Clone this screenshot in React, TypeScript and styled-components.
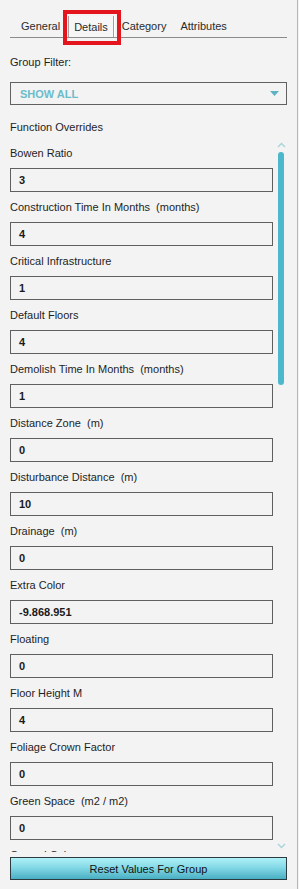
import styled, { createGlobalStyle } from 'styled-components';

const GlobalStyle = createGlobalStyle`
	html, body {
		margin: 0;
		padding: 0;
		background: #f3f3f3;
	}

	body {
		font-family: 'Liberation Sans', Arial, sans-serif;
		font-size: 11px;
		color: #1e1e1e;
	}
`;

const Panel = styled.div`
	display: flex;
	flex-direction: column;

	width: 298px;
	height: 889px;
	padding: 0 10px;
	box-sizing: border-box;
	overflow: hidden;

	background: #f3f3f3;
	border-right: 1px solid #9cc994;
`;

const TabBar = styled.div`
	display: flex;
	align-items: flex-end;
	gap: 2px;

	height: 38px;
	padding-left: 5px;
	box-sizing: border-box;
	border-bottom: 1px solid #8c8c8c;
`;

const Tab = styled.div<{ $active?: boolean }>`
	position: relative;
	padding: ${({ $active }) => ($active ? '0 5px' : '0 6px')};
	height: ${({ $active }) => ($active ? '21px' : '20px')};
	line-height: ${({ $active }) => ($active ? '23px' : '19px')};
	color: #2b2b2b;
	white-space: nowrap;
	box-sizing: border-box;

	border-left: ${({ $active }) => ($active ? '1px solid #a0a0a0' : 'none')};
	border-right: ${({ $active }) => ($active ? '1px solid #a0a0a0' : 'none')};
	box-shadow: ${({ $active }) => ($active ? '1px 0 0 #ffffff' : 'none')};
	background: ${({ $active }) => ($active ? '#f6f6f6' : 'transparent')};
`;

const Highlight = styled.span`
	position: absolute;
	top: -6px;
	left: -6px;
	right: -8px;
	bottom: -8px;
	border: 4px solid #e4151d;
	pointer-events: none;
`;

const SectionLabel = styled.div<{ $gap: number }>`
	margin-top: ${({ $gap }) => $gap}px;
	line-height: 14px;
`;

const Select = styled.div`
	display: flex;
	align-items: center;
	justify-content: space-between;

	height: 23px;
	margin-top: 13px;
	padding: 0 7px 0 9px;
	box-sizing: border-box;
	border: 1px solid #616161;

	color: #6cbccb;
	font-weight: bold;
`;

const Caret = styled.svg`
	width: 9px;
	height: 5px;
	fill: #5eb2c2;
`;

const ScrollArea = styled.div`
	display: flex;
	height: 714px;
	margin-top: 4px;
`;

const FieldList = styled.div`
	flex: 1;
	display: flex;
	flex-direction: column;
	gap: 8px;
	padding-top: 8px;
	overflow: hidden;
`;

const Field = styled.div`
	display: flex;
	flex-direction: column;
	gap: 8px;
`;

const FieldLabel = styled.div`
	line-height: 14px;
	white-space: pre;
`;

const ValueBox = styled.div`
	height: 24px;
	padding-left: 8px;
	box-sizing: border-box;
	border: 1px solid #5f5f5f;

	line-height: 22px;
	font-weight: bold;
	color: #1a1a1a;
`;

const ScrollBar = styled.div`
	display: flex;
	flex-direction: column;
	align-items: center;
	width: 14px;
	padding-left: 2px;
	box-sizing: border-box;
`;

const Chevron = styled.svg<{ $down?: boolean }>`
	width: 9px;
	height: 6px;
	margin: ${({ $down }) => ($down ? '0 0 3px' : '4px 0 0')};
	fill: none;
	stroke: #a9d3dc;
	stroke-width: 1.4;
`;

const Thumb = styled.div`
	width: 6px;
	height: 233px;
	margin-top: 4px;
	border-radius: 3px;
	background: #4db7cb;
`;

const Spacer = styled.div`
	flex: 1;
`;

const ResetButton = styled.button`
	height: 23px;
	margin-top: 5px;
	padding: 0;
	border: 1px solid #2c3b3f;

	background: linear-gradient(to bottom, #aef1f8 0%, #84d9e6 45%, #49afc4 100%);
	font-family: 'Liberation Sans', Arial, sans-serif;
	font-size: 11px;
	color: #111;
`;

const fields = [
	{ label: 'Bowen Ratio', value: '3' },
	{ label: 'Construction Time In Months  (months)', value: '4' },
	{ label: 'Critical Infrastructure', value: '1' },
	{ label: 'Default Floors', value: '4' },
	{ label: 'Demolish Time In Months  (months)', value: '1' },
	{ label: 'Distance Zone  (m)', value: '0' },
	{ label: 'Disturbance Distance  (m)', value: '10' },
	{ label: 'Drainage  (m)', value: '0' },
	{ label: 'Extra Color', value: '-9.868.951' },
	{ label: 'Floating', value: '0' },
	{ label: 'Floor Height M', value: '4' },
	{ label: 'Foliage Crown Factor', value: '0' },
	{ label: 'Green Space  (m2 / m2)', value: '0' },
	{ label: 'Ground Color', value: '' },
];

const tabs = ['General', 'Details', 'Category', 'Attributes'];

const App = () => {
	return (
		<>
			<GlobalStyle />
			<Panel>
				<TabBar>
					{tabs.map((tab) => (
						<Tab key={tab} $active={tab === 'Details'}>
							{tab}
							{tab === 'Details' && <Highlight />}
						</Tab>
					))}
				</TabBar>

				<SectionLabel $gap={17}>Group Filter:</SectionLabel>
				<Select>
					<span>SHOW ALL</span>
					<Caret viewBox='0 0 9 5'>
						<polygon points='0,0 9,0 4.5,5' />
					</Caret>
				</Select>

				<SectionLabel $gap={15}>Function Overrides</SectionLabel>

				<ScrollArea>
					<FieldList>
						{fields.map((field) => (
							<Field key={field.label}>
								<FieldLabel>{field.label}</FieldLabel>
								<ValueBox>{field.value}</ValueBox>
							</Field>
						))}
					</FieldList>
					<ScrollBar>
						<Chevron viewBox='0 0 9 6'>
							<polyline points='1,5 4.5,1.5 8,5' />
						</Chevron>
						<Thumb />
						<Spacer />
						<Chevron viewBox='0 0 9 6' $down>
							<polyline points='1,1 4.5,4.5 8,1' />
						</Chevron>
					</ScrollBar>
				</ScrollArea>

				<ResetButton>Reset Values For Group</ResetButton>
			</Panel>
		</>
	);
};

export default App;
